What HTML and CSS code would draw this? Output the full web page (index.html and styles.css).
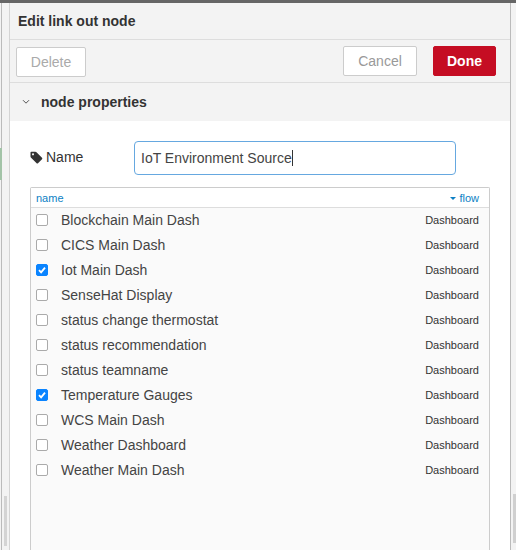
FILE: index.html
```html
<!doctype html>

<html lang="en">
<head>
	<meta http-equiv="Content-Type" content="text/html; charset=utf-8">
	<title>Edit link out node</title>
	<link rel="stylesheet" href="styles.css">
</head>
<body>
	<div class="topbar"></div>
	<div class="stage">
		<div class="gutter"><div class="gutter-mark"></div><div class="gutter-thumb"></div></div>
		<div class="tray">
			<div class="tray-title">Edit link out node</div>
			<div class="tray-toolbar">
				<button type="button" class="btn btn-delete">Delete</button>
				<div class="toolbar-right">
					<button type="button" class="btn btn-cancel">Cancel</button>
					<button type="button" class="btn btn-done">Done</button>
				</div>
			</div>
			<div class="section-head">
				<svg class="chevron" width="8" height="6" viewBox="0 0 8 6"><path d="M1 1.2 L4 4.2 L7 1.2" fill="none" stroke="#555" stroke-width="1"/></svg>
				<span>node properties</span>
			</div>
			<div class="section-body">
				<!-- name field -->
				<div class="form-row">
					<label class="name-label" for="nodeName">
						<svg width="13" height="13" viewBox="0 0 13 13"><path d="M0.5 1.6 Q0.5 0.8 1.3 0.8 L5.4 0.8 Q6 0.8 6.5 1.3 L12 6.8 Q12.7 7.5 12 8.2 L8 12.2 Q7.3 12.9 6.6 12.2 L1.1 6.7 Q0.5 6.2 0.5 5.5 Z M3 2.3 a1 1 0 1 0 0.01 0 Z" fill="#333" fill-rule="evenodd"/></svg>
						Name
					</label>
					<div class="name-input" id="nodeName">IoT Environment Source<span class="caret"></span></div>
				</div>
				<!-- link targets -->
				<div class="list-box">
					<div class="list-head">
						<span>name</span>
						<span class="sort"><i class="sort-arrow"></i>flow</span>
					</div>
					<div class="list-rows" id="rows"></div>
				</div>
			</div>
		</div>
		<div class="gutter-right"><div class="right-thumb"></div></div>
	</div>

	<script type="text/javascript">
		var nodes = [
			["Blockchain Main Dash", false],
			["CICS Main Dash", false],
			["Iot Main Dash", true],
			["SenseHat Display", false],
			["status change thermostat", false],
			["status recommendation", false],
			["status teamname", false],
			["Temperature Gauges", true],
			["WCS Main Dash", false],
			["Weather Dashboard", false],
			["Weather Main Dash", false]
		];
		var rows = document.getElementById("rows");
		var html = "";
		for (var i = 0; i < nodes.length; i++) {
			html += '<div class="row"><span class="check' + (nodes[i][1] ? ' checked' : '') + '">';
			if (nodes[i][1]) {
				html += '<svg width="12" height="12" viewBox="0 0 12 12"><path d="M3 6.2 L5.1 8.4 L9 3.6" fill="none" stroke="#fff" stroke-width="1.8"/></svg>';
			}
			html += '</span><span class="row-name">' + nodes[i][0] + '</span><span class="row-flow">Dashboard</span></div>';
		}
		rows.innerHTML = html;
	</script>
</body>
</html>
```

FILE: styles.css
```css
html, body { margin: 0; padding: 0; height: 100%; overflow: hidden; }
body { font-family: "Liberation Sans", Arial, sans-serif; color: #333; background: #f3f3f3; }

.topbar { height: 3px; background: #666; }
.stage { display: flex; height: 547px; }

/* Strip left of the tray: a thin rule, a sliver of the canvas and a scrollbar */
.gutter { width: 9px; flex: none; background: linear-gradient(to right, #f3f3f3 1px, #bbb 1px, #bbb 2px, #f3f3f3 2px); border-right: 1px solid #d4d4d4; position: relative; }
.gutter-mark { position: absolute; left: 0; top: 145px; width: 2px; height: 32px; background: #a3c4a8; }
.gutter-thumb { position: absolute; left: 4px; top: 493px; width: 3px; height: 50px; background: #d4d4d4; }

.tray { width: 500px; flex: none; display: flex; flex-direction: column; background: #f3f3f3; border-right: 1px solid #bbb; }
.tray-title { flex: none; height: 36px; line-height: 36px; padding-left: 8px; font-size: 14px; font-weight: bold; border-bottom: 1px solid #ddd; }
.tray-toolbar { flex: none; height: 42px; display: flex; justify-content: space-between; align-items: center; padding: 0 14px 0 6px; border-bottom: 1px solid #ddd; }
.toolbar-right { display: flex; gap: 16px; margin-top: -1px; }

.btn { font-family: inherit; font-size: 14px; height: 30px; border-radius: 2px; padding: 0; box-sizing: border-box; }
.btn-delete { width: 70px; background: #fff; border: 1px solid #ccc; color: #aaa; margin-top: 1px; }
.btn-cancel { width: 74px; background: #fff; border: 1px solid #ccc; color: #999; }
.btn-done { width: 63px; background: #c50d23; border: 1px solid #c50d23; color: #fff; font-weight: bold; }

.section-head { flex: none; height: 38px; display: flex; align-items: center; padding-left: 12px; font-size: 14px; font-weight: bold; }
.chevron { margin-right: 11px; }

.section-body { flex: 1; min-height: 0; background: #fff; padding: 20px 20px 0 20px; }

.form-row { display: flex; align-items: center; }
.name-label { width: 104px; font-size: 14px; display: flex; align-items: center; gap: 3px; margin-top: -2px; }
.name-input { width: 322px; height: 34px; box-sizing: border-box; border: 1px solid #66a8e0; border-radius: 4px; font-size: 14px; line-height: 32px; padding-left: 6px; color: #444; }
.caret { display: inline-block; width: 1px; height: 16px; background: #333; vertical-align: -3px; }

.list-box { margin-top: 12px; width: 458px; height: 362px; border: 1px solid #ccc; border-bottom: none; border-radius: 2px 2px 0 0; background: #fafafa; }
.list-head { height: 19px; box-sizing: content-box; background: #fff; border-bottom: 1px solid #ddd; display: flex; justify-content: space-between; align-items: center; padding: 0 10px 0 5px; font-size: 11px; color: #0d7fc4; }
.sort-arrow { display: inline-block; width: 0; height: 0; border-left: 3px solid transparent; border-right: 3px solid transparent; border-top: 3px solid #0d7fc4; margin-right: 3px; vertical-align: 2px; }

.list-rows { margin-top: -1px; }
.row { height: 25px; display: flex; align-items: center; padding: 0 10px 0 5px; }
.check { width: 10px; height: 10px; border: 1px solid #aaa; border-radius: 2px; background: #fff; flex: none; margin-right: 13px; }
.check.checked { background: #0a84ff; border-color: #0a84ff; }
.check svg { display: block; margin: -1px; }
.row-name { flex: 1; font-size: 14px; color: #444; }
.row-flow { font-size: 11px; color: #333; }

.gutter-right { flex: 1; position: relative; }
.right-thumb { position: absolute; right: 0; top: 491px; width: 3px; height: 49px; background: #d0d0d0; }
```
